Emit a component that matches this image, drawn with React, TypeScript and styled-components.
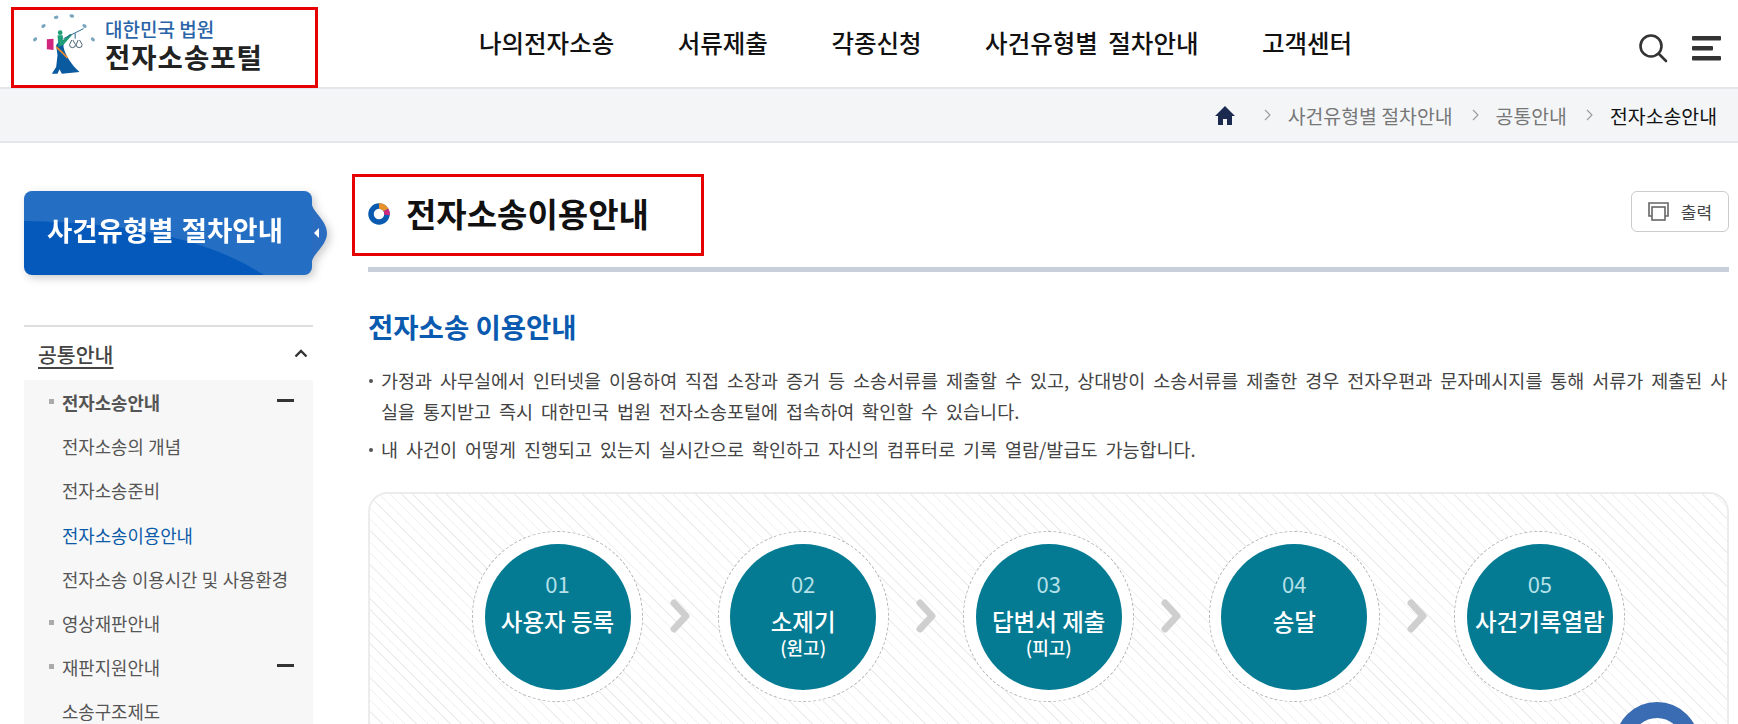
import React from 'react';
import styled, { createGlobalStyle } from 'styled-components';

const FONT = `"Noto Sans CJK KR", "Noto Sans", sans-serif`;

const GlobalStyle = createGlobalStyle`
  html, body {
    margin: 0;
    padding: 0;
    background: #fff;
    overflow: hidden;
    font-family: ${FONT};
    color: #222;
  }
  * { box-sizing: border-box; }
`;

const Page = styled.div`
  width: 1738px;
  height: 724px;
  overflow: hidden;
  position: relative;
`;

const Header = styled.header`
  height: 89px;
  display: flex;
  align-items: flex-start;
  border-bottom: 2px solid #e4e6e9;
`;

const LogoBox = styled.a`
  width: 307px;
  height: 81px;
  margin: 7px 0 0 11px;
  border: 3px solid #e60000;
  display: flex;
  align-items: center;
  padding: 0 0 6px 16px;
  flex-shrink: 0;
`;

const LogoText = styled.div`
  margin-left: 8px;
  display: flex;
  flex-direction: column;
`;

const LogoSmall = styled.div`
  font-size: 19px;
  line-height: 22px;
  color: #2a64a8;
  font-weight: 500;
`;

const LogoBig = styled.div`
  font-size: 27.5px;
  line-height: 32px;
  color: #222;
  font-weight: 700;
  letter-spacing: 1px;
`;

const Nav = styled.nav`
  display: flex;
  gap: 63.5px;
  margin: 25px 0 0 161px;
`;

const NavItem = styled.a`
  font-size: 24.5px;
  line-height: 36px;
  font-weight: 500;
  color: #111;
  white-space: nowrap;
  word-spacing: 5px;
`;

const HeaderTools = styled.div`
  margin: 33px 0 0 auto;
  padding-right: 17px;
  display: flex;
  gap: 24px;
  align-items: center;
`;

const Breadcrumb = styled.div`
  height: 54px;
  background: #f3f5f7;
  border-bottom: 2px solid #e4e6e9;
  display: flex;
  align-items: center;
  justify-content: flex-end;
  padding-right: 21px;
  font-size: 19.4px;
  color: #777;
`;

const HomeIcon = styled.svg`
  margin-right: 10px;
`;

const Crumb = styled.span<{ $current?: boolean }>`
  color: ${p => (p.$current ? '#111' : '#777')};
  white-space: nowrap;
`;

const ChevIcon = styled.svg`
  margin: 0 17px 0 19px;
`;

const Body = styled.div`
  display: flex;
  padding: 48px 0 0 24px;
`;

const Side = styled.aside`
  width: 289px;
  flex-shrink: 0;
`;

const SideWrap = styled.div`
  position: relative;
  filter: drop-shadow(3px 3px 4px rgba(0, 0, 0, 0.2));
`;

const SideTitle = styled.div`
  position: relative;
  height: 84px;
  width: 288px;
  border-radius: 8px;
  background: #0459ba;
  overflow: hidden;
  display: flex;
  align-items: center;
  justify-content: center;
  color: #fff;
  font-size: 27.5px;
  font-weight: 700;
  padding-right: 6px;
  padding-bottom: 8px;
`;

const SideSheen = styled.svg`
  position: absolute;
  left: 0;
  top: 0;
`;

const SideLabel = styled.span`
  position: relative;
  word-spacing: 2px;
`;

const SideNotch = styled.svg`
  position: absolute;
  left: 288px;
  top: 14px;
`;

const TopMenu = styled.div`
  margin-top: 50px;
  border-top: 2px solid #dedede;
  height: 55px;
  display: flex;
  align-items: center;
  justify-content: space-between;
  padding: 0 5px 0 14px;
`;

const TopMenuLabel = styled.a`
  font-size: 20.5px;
  font-weight: 500;
  color: #444;
  text-decoration: underline;
  text-underline-offset: 4px;
`;

const SubMenu = styled.ul`
  list-style: none;
  margin: 0;
  padding: 0 0 0 38px;
  background: #f7f7f7;
  height: 400px;
`;

const SubItem = styled.li<{ $depth?: boolean; $bold?: boolean; $active?: boolean }>`
  position: relative;
  height: 44.2px;
  display: flex;
  align-items: center;
  justify-content: space-between;
  padding-right: 19px;
  font-size: 17.8px;
  word-spacing: 0.5px;
  white-space: nowrap;
  font-weight: ${p => (p.$bold ? 700 : 400)};
  color: ${p => (p.$active ? '#0b5aa8' : '#555')};
  &::before {
    content: ${p => (p.$depth ? '""' : 'none')};
    position: absolute;
    left: -13px;
    top: 19px;
    width: 5px;
    height: 5px;
    background: #aaa;
  }
`;

const Minus = styled.i`
  display: block;
  width: 17px;
  height: 3px;
  background: #333;
  margin-top: -4px;
`;

const Content = styled.main`
  flex: 1;
  margin-left: 55px;
  padding: 1px 9px 0 0;
  min-width: 0;
`;

const TitleRow = styled.div`
  position: relative;
  height: 80px;
  border-bottom: 5px solid #c8d0dc;
  display: flex;
  align-items: flex-start;
  justify-content: space-between;
`;

const TitleBox = styled.div`
  position: relative;
  display: flex;
  align-items: center;
  gap: 16px;
  width: 352px;
  height: 82px;
  margin: -18px 0 0 -16px;
  padding: 0 0 3px 13px;
  border: 3px solid #e60000;
`;

const PageTitle = styled.h1`
  margin: 0;
  font-size: 33px;
  font-weight: 700;
  color: #111;
  line-height: 1;
`;

const PrintBtn = styled.button`
  width: 98px;
  height: 41px;
  margin-top: -1px;
  background: #fff;
  border: 1px solid #ccc;
  border-radius: 6px;
  display: flex;
  align-items: center;
  justify-content: center;
  gap: 12px;
  font-family: ${FONT};
  font-size: 17px;
  color: #444;
  padding: 0;
`;

const SectionTitle = styled.h2`
  margin: 35px 0 0;
  font-size: 27.5px;
  line-height: 38px;
  font-weight: 700;
  color: #0a5ab0;
`;

const Bullets = styled.ul`
  list-style: none;
  margin: 20px 0 0;
  padding: 0;
`;

const Bullet = styled.li`
  position: relative;
  padding-left: 13px;
  font-size: 18.5px;
  word-spacing: 3.8px;
  word-break: break-all;
  line-height: 31px;
  color: #444;
  margin-bottom: 7px;
  &::before {
    content: '';
    position: absolute;
    left: 1px;
    top: 14px;
    width: 4px;
    height: 4px;
    border-radius: 50%;
    background: #555;
  }
`;

const StepPanel = styled.div`
  position: relative;
  margin-top: 27px;
  height: 300px;
  border: 2px solid #ececec;
  border-radius: 20px;
  background: repeating-linear-gradient(
    45deg,
    #fff 0,
    #fff 7px,
    #efefef 7px,
    #efefef 8px
  );
  display: flex;
  justify-content: flex-start;
  padding: 37px 0 0 102px;
  gap: 27.3px;
  align-items: flex-start;
`;

const StepOuter = styled.div`
  width: 171px;
  height: 171px;
  border-radius: 50%;
  border: 1px dashed #b5b5b5;
  background: #fff;
  display: flex;
  align-items: center;
  justify-content: center;
  flex-shrink: 0;
`;

const StepCircle = styled.div`
  width: 146px;
  height: 146px;
  border-radius: 50%;
  background: #047a93;
  color: #fff;
  display: flex;
  flex-direction: column;
  align-items: center;
  padding-top: 26px;
`;

const StepNo = styled.span`
  font-size: 22px;
  line-height: 26px;
  color: #b4e0e8;
`;

const StepName = styled.span`
  font-size: 23.5px;
  line-height: 30px;
  margin-top: 10px;
  white-space: nowrap;
  font-weight: 500;
`;

const StepSub = styled.span`
  font-size: 18px;
  line-height: 20px;
  margin-top: 1px;
  font-weight: 500;
`;

const Arrow = styled.svg`
  margin-top: 68px;
  flex-shrink: 0;
`;

const FloatRing = styled.div`
  position: absolute;
  right: 28px;
  top: 208px;
  width: 84px;
  height: 84px;
  border-radius: 50%;
  border: 16px solid #3a6cb4;
`;

const MENU: { label: string; depth?: boolean; bold?: boolean; active?: boolean; minus?: boolean }[] = [
  { label: '전자소송안내', depth: true, bold: true, minus: true },
  { label: '전자소송의 개념' },
  { label: '전자소송준비' },
  { label: '전자소송이용안내', active: true },
  { label: '전자소송 이용시간 및 사용환경' },
  { label: '영상재판안내', depth: true },
  { label: '재판지원안내', depth: true, minus: true },
  { label: '소송구조제도' },
];

const STEPS: { no: string; name: string; sub?: string }[] = [
  { no: '01', name: '사용자 등록' },
  { no: '02', name: '소제기', sub: '(원고)' },
  { no: '03', name: '답변서 제출', sub: '(피고)' },
  { no: '04', name: '송달' },
  { no: '05', name: '사건기록열람' },
];

const LOGO_DOTS = [[45, 102], [70, 62], [108, 36], [155, 32], [193, 62], [218, 102]];

function CourtLogo() {
  return (
    <svg width="67" height="65" viewBox="30 20 200 195">
      {LOGO_DOTS.map(([x, y]) => (
        <ellipse key={x} cx={x} cy={y} rx="7" ry="5" fill="#7aa7c0" transform={`rotate(${(x - 130) / 2} ${x} ${y})`} />
      ))}
      <path d="M80 102l20 -2v34l-20 -2z" fill="#d0267e" />
      <path d="M108 120L122 100l8 5v20c5 25 25 55 48 75l-53 5-7-13-6 13H95l13-20 4-35z" fill="#0a5aa0" />
      <circle cx="120" cy="82" r="7" fill="#1f9e78" />
      <path d="M112 90h16v15l22-20 5 5-25 28-15 7z" fill="#1f9e78" />
      <path d="M108 125c12 10 22 20 34 33" stroke="#ee8a2a" strokeWidth="5" fill="none" />
      <path d="M130 100l60-30M165 84v16" stroke="#2a6a90" strokeWidth="3" fill="none" />
      <path d="M148 118a9 9 0 0018 0M168 118a9 9 0 0018 0M155 104l-7 14M158 104l8 14M174 104l-6 14M178 104l8 14" stroke="#2a4a5a" strokeWidth="2.5" fill="none" />
    </svg>
  );
}

function Chev() {
  return (
    <ChevIcon width="7" height="12" viewBox="0 0 7 12" fill="none" stroke="#999" strokeWidth="1.1">
      <path d="M1 1l5 5-5 5" />
    </ChevIcon>
  );
}

function App() {
  return (
    <Page>
      <GlobalStyle />
      <Header>
        <LogoBox>
          <CourtLogo />
          <LogoText>
            <LogoSmall>대한민국 법원</LogoSmall>
            <LogoBig>전자소송포털</LogoBig>
          </LogoText>
        </LogoBox>
        <Nav>
          <NavItem>나의전자소송</NavItem>
          <NavItem>서류제출</NavItem>
          <NavItem>각종신청</NavItem>
          <NavItem>사건유형별 절차안내</NavItem>
          <NavItem>고객센터</NavItem>
        </Nav>
        <HeaderTools>
          <svg width="30" height="30" viewBox="0 0 30 30" fill="none" stroke="#333" strokeWidth="2.6">
            <circle cx="13" cy="13" r="10.5" />
            <path d="M21 21l7 7" strokeLinecap="round" />
          </svg>
          <svg width="29" height="25" viewBox="0 0 29 25" fill="#333">
            <rect x="0" y="0" width="29" height="4.5" rx="1" />
            <rect x="0" y="10" width="21" height="4.5" rx="1" />
            <rect x="0" y="20" width="29" height="4.5" rx="1" />
          </svg>
        </HeaderTools>
      </Header>
      <Breadcrumb>
        <HomeIcon width="20" height="19" viewBox="0 0 20 19" fill="#1c2a50">
          <path d="M10 0L0 10h3v9h5v-6h4v6h5v-9h3z" />
        </HomeIcon>
        <Chev />
        <Crumb>사건유형별 절차안내</Crumb>
        <Chev />
        <Crumb>공통안내</Crumb>
        <Chev />
        <Crumb $current>전자소송안내</Crumb>
      </Breadcrumb>
      <Body>
        <Side>
          <SideWrap>
            <SideTitle>
              <SideSheen width="288" height="84" viewBox="0 0 288 84">
                <path d="M0 0h288v84H240C190 52 120 32 0 30z" fill="#fff" opacity="0.13" />
              </SideSheen>
              <SideLabel>사건유형별 절차안내</SideLabel>
            </SideTitle>
            <SideNotch width="16" height="56" viewBox="0 0 16 56">
              <path d="M0 0c2 8 15 16 15 28S2 48 0 56z" fill="#2a6dc0" />
              <path d="M2 28l5-5v10z" fill="#fff" />
            </SideNotch>
          </SideWrap>
          <TopMenu>
            <TopMenuLabel>공통안내</TopMenuLabel>
            <svg width="14" height="9" viewBox="0 0 14 9" fill="none" stroke="#333" strokeWidth="2.4">
              <path d="M1.5 7.5L7 2l5.5 5.5" />
            </svg>
          </TopMenu>
          <SubMenu>
            {MENU.map(m => (
              <SubItem key={m.label} $depth={m.depth} $bold={m.bold} $active={m.active}>
                {m.label}
                {m.minus && <Minus />}
              </SubItem>
            ))}
          </SubMenu>
        </Side>
        <Content>
          <TitleRow>
            <TitleBox>
              <svg width="22" height="22" viewBox="0 0 22 22" fill="none" strokeWidth="5.5">
                <circle cx="11" cy="11" r="8" stroke="#0a5ab0" />
                <path d="M11 3a8 8 0 017 4" stroke="#e8912a" />
                <path d="M18 7a8 8 0 011 5" stroke="#d0267e" />
              </svg>
              <PageTitle>전자소송이용안내</PageTitle>
            </TitleBox>
            <PrintBtn>
              <svg width="21" height="19" viewBox="0 0 21 19" fill="none" stroke="#666" strokeWidth="1.6">
                <path d="M4 14H1V1h19v13h-3" />
                <rect x="4" y="5" width="13" height="13" />
              </svg>
              출력
            </PrintBtn>
          </TitleRow>
          <SectionTitle>전자소송 이용안내</SectionTitle>
          <Bullets>
            <Bullet>
              가정과 사무실에서 인터넷을 이용하여 직접 소장과 증거 등 소송서류를 제출할 수 있고, 상대방이 소송서류를 제출한 경우 전자우편과 문자메시지를 통해 서류가 제출된 사실을 통지받고 즉시 대한민국 법원 전자소송포털에 접속하여 확인할 수 있습니다.
            </Bullet>
            <Bullet>내 사건이 어떻게 진행되고 있는지 실시간으로 확인하고 자신의 컴퓨터로 기록 열람/발급도 가능합니다.</Bullet>
          </Bullets>
          <StepPanel>
            {STEPS.map((s, i) => (
              <React.Fragment key={s.no}>
                {i > 0 && (
                  <Arrow width="20" height="34" viewBox="0 0 20 34" fill="none" stroke="#cfcfcf" strokeWidth="7">
                    <path d="M4 4l12 13L4 30" strokeLinecap="round" strokeLinejoin="round" />
                  </Arrow>
                )}
                <StepOuter>
                  <StepCircle>
                    <StepNo>{s.no}</StepNo>
                    <StepName>{s.name}</StepName>
                    {s.sub && <StepSub>{s.sub}</StepSub>}
                  </StepCircle>
                </StepOuter>
              </React.Fragment>
            ))}
            <FloatRing />
          </StepPanel>
        </Content>
      </Body>
    </Page>
  );
}

export default App;
